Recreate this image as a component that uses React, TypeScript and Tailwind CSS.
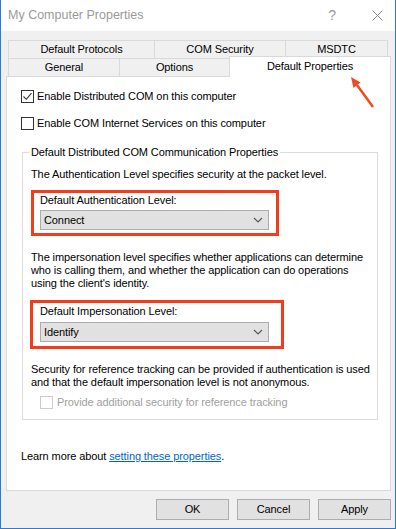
const font = { fontFamily: '"Liberation Sans", Arial, sans-serif' };

function Check({ checked, disabled }: { checked?: boolean; disabled?: boolean }) {
  return (
    <div
      className={`w-[13px] h-[13px] shrink-0 border bg-white flex items-center justify-center ${
        disabled ? "border-[#cccccc]" : "border-[#333333]"
      }`}
    >
      {checked && (
        <svg width="11" height="11" viewBox="0 0 11 11">
          <path d="M1.5 5.5 L4.3 8.3 L9.5 2.2" fill="none" stroke="#333" strokeWidth="1.1" />
        </svg>
      )}
    </div>
  );
}

function Select({ value }: { value: string }) {
  return (
    <div className="w-[229px] h-[20px] bg-[#e1e1e1] border border-[#adadad] flex items-center justify-between pl-[3px] pr-[5px]">
      <span>{value}</span>
      <svg width="10" height="6" viewBox="0 0 10 6">
        <path d="M1 1 L5 5 L9 1" fill="none" stroke="#555" strokeWidth="1.1" />
      </svg>
    </div>
  );
}

function Button({ label }: { label: string }) {
  return (
    <div className="w-[73px] h-[21px] bg-[#e1e1e1] border border-[#adadad] flex items-center justify-center">
      {label}
    </div>
  );
}

const tabRow1 = [
  { label: "Default Protocols", w: "w-[147px]" },
  { label: "COM Security", w: "w-[132px]" },
  { label: "MSDTC", w: "w-[103px]" },
];

export default function App() {
  return (
    <div
      style={font}
      className="relative w-[396px] h-[529px] bg-[#f0f0f0] border-x border-b border-[#2b79d8] text-[11px] leading-[13px] tracking-[-0.1px] text-black overflow-hidden"
    >
      {/* title bar */}
      <div className="h-[31px] bg-white flex items-center pl-[7px] pr-[12px]">
        <span className="text-[12.5px] text-[#9a9a9a] tracking-normal flex-1">My Computer Properties</span>
        <span className="text-[14px] text-[#9a9a9a] mr-[36px]">?</span>
        <svg width="11" height="11" viewBox="0 0 11 11">
          <path d="M0.5 0.5 L10.5 10.5 M10.5 0.5 L0.5 10.5" stroke="#8a8a8a" strokeWidth="1" />
        </svg>
      </div>

      {/* tabs */}
      <div className="mt-[9px] ml-[7px] flex">
        {tabRow1.map((t, i) => (
          <div
            key={t.label}
            className={`${t.w} h-[19px] border border-[#d9d9d9] flex items-center justify-center ${i > 0 ? "-ml-px" : ""}`}
          >
            {t.label}
          </div>
        ))}
      </div>
      <div className="relative z-10 -mt-px ml-[7px] flex items-start h-[19px]">
        <div className="w-[112px] h-[19px] border border-[#d9d9d9] flex items-center justify-center">General</div>
        <div className="w-[111px] h-[19px] -ml-px border border-[#d9d9d9] flex items-center justify-center">Options</div>
        <div className="w-[162px] h-[21px] -mt-[2px] -ml-px border border-b-0 border-[#d9d9d9] bg-white flex items-start justify-center pt-[3px]">
          Default Properties
        </div>
      </div>

      {/* panel */}
      <div className="-mt-px ml-[5px] w-[385px] h-[415px] bg-white border border-[#d9d9d9] pt-[13px]">
        <div className="ml-[14px] flex items-center gap-[3px]">
          <Check checked />
          <span>Enable Distributed COM on this computer</span>
        </div>
        <div className="ml-[14px] mt-[14px] flex items-center gap-[3px]">
          <Check />
          <span>Enable COM Internet Services on this computer</span>
        </div>

        <div className="relative ml-[15px] mt-[22px] w-[356px] border border-[#dcdcdc] pl-[8px] pt-[15px] pb-[10px]">
          <span className="absolute -top-[7px] left-[6px] px-[2px] bg-white">
            Default Distributed COM Communication Properties
          </span>
          <p>The Authentication Level specifies security at the packet level.</p>

          <div className="mt-[9px] w-[248px] border-[3px] border-[#f23c1c] pl-[6px] pt-[1px] pb-[3px]">
            <p>Default Authentication Level:</p>
            <div className="mt-[3px]">
              <Select value="Connect" />
            </div>
          </div>

          <p className="mt-[15px] whitespace-nowrap">
            The impersonation level specifies whether applications can determine
            <br />
            who is calling them, and whether the application can do operations
            <br />
            using the client's identity.
          </p>

          <div className="mt-[10px] -ml-px w-[254px] border-[3px] border-[#f23c1c] pl-[7px] pt-[2px] pb-[4px]">
            <p>Default Impersonation Level:</p>
            <div className="mt-[4px]">
              <Select value="Identify" />
            </div>
          </div>

          <p className="mt-[14px] whitespace-nowrap">
            Security for reference tracking can be provided if authentication is used
            <br />
            and that the default impersonation level is not anonymous.
          </p>

          <div className="mt-[7px] ml-[9px] flex items-center gap-[4px] text-[#a0a0a0]">
            <Check disabled />
            <span>Provide additional security for reference tracking</span>
          </div>
        </div>

        <p className="ml-[14px] mt-[30px]">
          Learn more about <span className="text-[#0066cc] underline">setting these properties</span>.
        </p>
      </div>

      {/* buttons */}
      <div className="mt-[8px] mr-[4px] flex justify-end gap-[8px]">
        <Button label="OK" />
        <Button label="Cancel" />
        <Button label="Apply" />
      </div>

      {/* annotation arrow */}
      <svg className="absolute left-0 top-0 pointer-events-none" width="396" height="529" viewBox="0 0 396 529">
        <line x1="372" y1="107" x2="356" y2="85" stroke="#f04a22" strokeWidth="2.5" />
        <path d="M350 77 L359.5 82.5 L352.5 88 Z" fill="#f04a22" />
      </svg>
    </div>
  );
}
